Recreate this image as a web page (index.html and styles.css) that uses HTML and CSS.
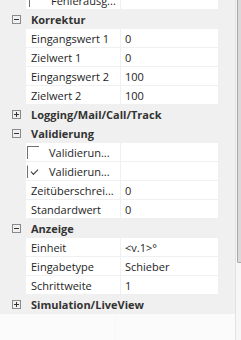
FILE: index.html
```html
<!DOCTYPE html>
<html lang="de">
<head>
  <meta charset="UTF-8" />
  <meta name="viewport" content="width=device-width, initial-scale=1.0"/>
  <title>Eigenschaften</title>
  <link rel="stylesheet" href="styles.css">
</head>
<body>
  <div class="grid">
    <div class="list">
      <div class="row sub"><span class="label"><span class="box"></span>Fehlerausg...</span><span class="value"></span></div>

      <div class="cat"><span class="toggle open"></span>Korrektur</div>
      <div class="row"><span class="label">Eingangswert 1</span><span class="value">0</span></div>
      <div class="row"><span class="label">Zielwert 1</span><span class="value">0</span></div>
      <div class="row"><span class="label">Eingangswert 2</span><span class="value">100</span></div>
      <div class="row"><span class="label">Zielwert 2</span><span class="value">100</span></div>

      <div class="cat"><span class="toggle"></span>Logging/Mail/Call/Track</div>

      <div class="cat"><span class="toggle open"></span>Validierung</div>
      <div class="row"><span class="label"><span class="box"></span>Validierun...</span><span class="value"></span></div>
      <div class="row"><span class="label"><span class="box checked"></span>Validierun...</span><span class="value"></span></div>
      <div class="row"><span class="label">Zeitüberschrei...</span><span class="value">0</span></div>
      <div class="row"><span class="label">Standardwert</span><span class="value">0</span></div>

      <div class="cat"><span class="toggle open"></span>Anzeige</div>
      <div class="row"><span class="label">Einheit</span><span class="value">&lt;v.1&gt;°</span></div>
      <div class="row"><span class="label">Eingabetype</span><span class="value">Schieber</span></div>
      <div class="row"><span class="label">Schrittweite</span><span class="value">1</span></div>

      <div class="cat"><span class="toggle"></span>Simulation/LiveView</div>

      <div class="empty"><span class="label"></span><span class="value"></span></div>
    </div>
    <div class="scrollbar"><div class="thumb"></div></div>
  </div>
</body>
</html>
```

FILE: styles.css
```css
body {
  margin: 0;
  background: #f0f0f0;
  font-family: 'Open Sans', 'Noto Sans', sans-serif;
  font-size: 11px;
  color: #1e1e1e;
  overflow: hidden;
}

.grid {
  display: flex;
  height: 340px;
}

.list {
  width: 235px;
  margin-top: -9px;
  display: flex;
  flex-direction: column;
  gap: 1px;
}

.row {
  display: flex;
  gap: 1px;
  height: 18px;
  margin-left: 26px;
  width: 192px;
}

.label,
.value {
  display: flex;
  align-items: center;
  background: #fff;
  white-space: nowrap;
  overflow: hidden;
}

.label {
  width: 89px;
  padding-left: 5px;
}

.value {
  flex: 1;
  padding-left: 4px;
}

.box {
  width: 12px;
  height: 13px;
  margin: 0 10px 0 -4px;
  border-left: 1px solid #707070;
  border-top: 1px solid #707070;
  box-sizing: border-box;
  position: relative;
}

.box.checked {
  border-top-color: transparent;
}

.box.checked::after {
  content: "";
  position: absolute;
  left: 3px;
  top: 3px;
  width: 6px;
  height: 3px;
  border-left: 1px solid #333;
  border-bottom: 1px solid #333;
  transform: rotate(-45deg);
}

.sub .box {
  margin-left: -2px;
}

.cat {
  display: flex;
  align-items: center;
  height: 18px;
  font-weight: 700;
  color: #333;
}

.toggle {
  width: 9px;
  height: 9px;
  margin: 0 10px 0 12px;
  border: 1px solid #8a8a8a;
  box-sizing: border-box;
  position: relative;
}

.toggle::before,
.toggle::after {
  content: "";
  position: absolute;
  background: #333;
}

.toggle::before {
  left: 1px;
  right: 1px;
  top: 3px;
  height: 1px;
}

.toggle::after {
  top: 1px;
  bottom: 1px;
  left: 3px;
  width: 1px;
}

.toggle.open::after {
  display: none;
}

.empty {
  flex: 1;
  display: flex;
  gap: 1px;
  background: #f7f7f7;
}

.empty .label,
.empty .value {
  background: #fbfbfb;
}

.empty .label {
  width: 115px;
  padding: 0;
}

.scrollbar {
  flex: 1;
  background: #f7f7f7;
  border-left: 1px solid #e2e2e2;
}

.thumb {
  height: 262px;
  margin-left: 1px;
  background: #dadada;
  border: 1px solid #a8a8a8;
  border-right: none;
  border-top: none;
  border-radius: 0 0 0 2px;
}
```
